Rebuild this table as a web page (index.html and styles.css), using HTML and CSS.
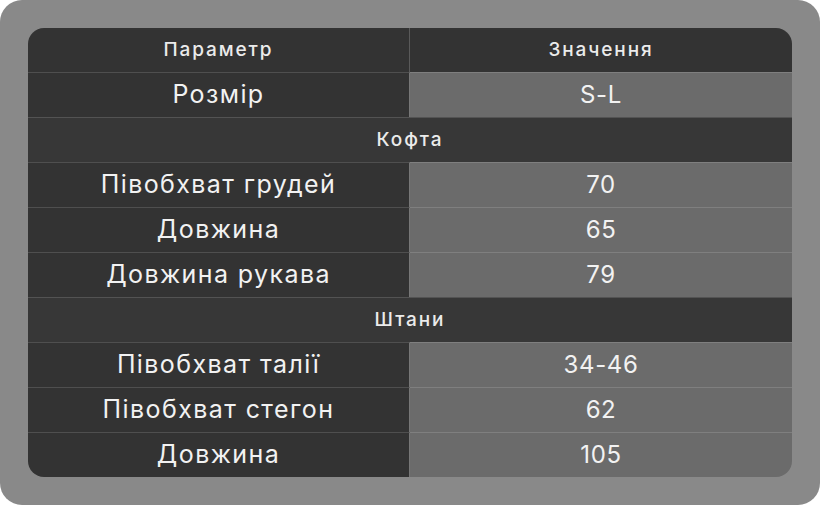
FILE: index.html
```html
<!DOCTYPE html>
<html lang="uk">
<head>
<meta charset="utf-8">
<link rel="stylesheet" href="styles.css">
</head>
<body>
<div class="frame">
  <table class="sizes">
    <thead>
      <tr><th>Параметр</th><th>Значення</th></tr>
    </thead>
    <tbody>
      <tr><td class="k">Розмір</td><td class="v">S-L</td></tr>
      <tr class="section"><td colspan="2">Кофта</td></tr>
      <tr><td class="k">Півобхват грудей</td><td class="v">70</td></tr>
      <tr><td class="k">Довжина</td><td class="v">65</td></tr>
      <tr><td class="k">Довжина рукава</td><td class="v">79</td></tr>
      <tr class="section"><td colspan="2">Штани</td></tr>
      <tr><td class="k">Півобхват талії</td><td class="v">34-46</td></tr>
      <tr><td class="k">Півобхват стегон</td><td class="v">62</td></tr>
      <tr><td class="k">Довжина</td><td class="v">105</td></tr>
    </tbody>
  </table>
</div>
</body>
</html>
```
FILE: styles.css
```css
html, body {
  margin: 0;
  padding: 0;
  background: #ffffff;
}
.frame {
  width: 820px;
  height: 505px;
  box-sizing: border-box;
  background: #898989;
  border-radius: 22px;
  padding: 28px;
}
.sizes {
  width: 764px;
  border-collapse: separate;
  border-spacing: 0;
  border-radius: 16px;
  overflow: hidden;
  font-family: Inter, "Noto Sans", sans-serif;
  color: #f2f2f2;
  table-layout: fixed;
}
.sizes th, .sizes td {
  height: 45px;
  padding: 0 0 2px;
  text-align: center;
  vertical-align: middle;
  box-sizing: border-box;
}
.sizes th {
  height: 44px;
  background: #333333;
  font-size: 19px;
  font-weight: 500;
  color: #ebebeb;
  letter-spacing: 1.9px;
}
.sizes th:first-child {
  border-right: 1px solid #5a5a5a;
}
.sizes tbody td {
  border-top: 1px solid rgba(255,255,255,0.14);
  font-size: 24px;
  font-weight: 400;
  letter-spacing: 0.6px;
}
.sizes td.k {
  background: #333333;
  border-right: 1px solid #777777;
  font-size: 25px;
  letter-spacing: 1.4px;
}
.sizes td.v {
  background: #6b6b6b;
}
.sizes tr.section td {
  background: #373737;
  font-size: 19px;
  font-weight: 500;
  color: #ebebeb;
  letter-spacing: 1.9px;
}
```
